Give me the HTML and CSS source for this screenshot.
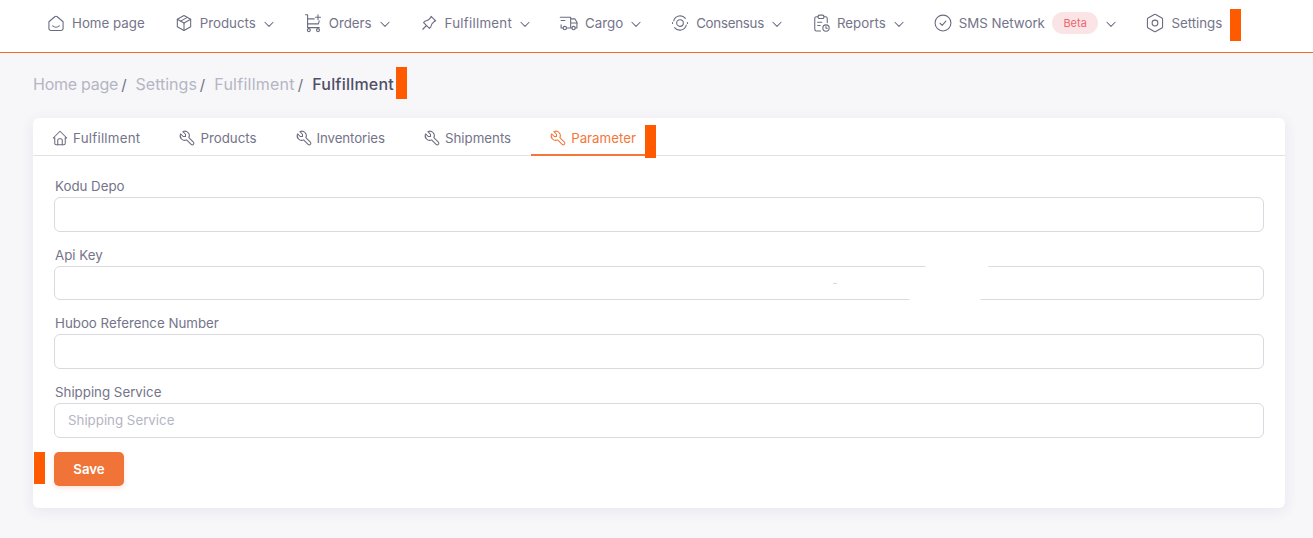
FILE: index.html
```html
<!DOCTYPE html>
<html lang="en">
<head>
<meta charset="UTF-8" />
<meta name="viewport" content="width=device-width, initial-scale=1" />
<title>Fulfillment</title>
<link rel="stylesheet" href="styles.css">
</head>
<body>

<svg class="defs" width="0" height="0">
  <symbol id="chevron" viewBox="0 0 24 24"><path d="M5 9l7 7l7 -7" /></symbol>
  <symbol id="wrench" viewBox="0 0 24 24"><path d="M7 10h3v-3l-3.500 -3.500a6 6 0 0 1 8 8l6 6a2 2 0 0 1 -3 3l-6 -6a6 6 0 0 1 -8 -8l3.500 3.500" /></symbol>
</svg>

<header class="topbar">
  <nav class="nav">
    <a class="nav-item">
      <svg class="icon" viewBox="0 0 24 24"><path d="M3.500 10.500l7 -6a2.400 2.400 0 0 1 3 0l7 6v8a2.500 2.500 0 0 1 -2.500 2.500h-12a2.500 2.500 0 0 1 -2.500 -2.500z" /><path d="M8 15.500c2.300 1.800 5.700 1.800 8 0" /></svg>
      Home page
    </a>
    <a class="nav-item">
      <svg class="icon" viewBox="0 0 24 24"><path d="M12 3l8 4.500v9l-8 4.500l-8 -4.500v-9z" /><path d="M12 12l8 -4.500" /><path d="M12 12v9" /><path d="M12 12l-8 -4.500" /><path d="M16 5.250l-8 4.500" /></svg>
      Products
      <svg class="chevron"><use href="#chevron" /></svg>
    </a>
    <a class="nav-item">
      <svg class="icon" viewBox="0 0 24 24"><path d="M3 2h2.500v15.500h14" /><path d="M5.500 7h8" /><path d="M5.500 13h13l1 -3.500" /><circle cx="7" cy="20.500" r="1.800" /><circle cx="18" cy="20.500" r="1.800" /><path d="M18 2v6M15 5h6" /></svg>
      Orders
      <svg class="chevron"><use href="#chevron" /></svg>
    </a>
    <a class="nav-item wide">
      <svg class="icon" viewBox="0 0 24 24"><path d="M15 4.500l-4 4l-4 1.500l-1.500 1.500l7 7l1.500 -1.500l1.500 -4l4 -4" /><path d="M9 15l-4.500 4.500" /><path d="M14.500 4l5.500 5.500" /></svg>
      Fulfillment
      <svg class="chevron"><use href="#chevron" /></svg>
    </a>
    <a class="nav-item">
      <svg class="icon" viewBox="0 0 24 24"><circle cx="7" cy="18" r="2" /><circle cx="17.500" cy="18" r="2" /><path d="M5 18h-2.500v-4m-1 -9h12.500v13m-4 0h5.500m4 0h2v-6h-7.500m0 -5h5l3 5" /><path d="M2.500 9h4.500" /></svg>
      Cargo
      <svg class="chevron"><use href="#chevron" /></svg>
    </a>
    <a class="nav-item narrow">
      <svg class="icon" viewBox="0 0 24 24"><circle cx="12" cy="12" r="4" /><path d="M4.500 9.500a8 8 0 0 1 14 -3" /><path d="M19.500 14.500a8 8 0 0 1 -14 3" /><path d="M3 11.500a9 9 0 0 0 0 1" /><path d="M21 11.500v1" /></svg>
      Consensus
      <svg class="chevron"><use href="#chevron" /></svg>
    </a>
    <a class="nav-item">
      <svg class="icon" viewBox="0 0 24 24"><path d="M8.500 4.500h-2a2 2 0 0 0 -2 2v13a2 2 0 0 0 2 2h5" /><path d="M15.500 4.500h2a2 2 0 0 1 2 2v5" /><rect x="8.500" y="2.500" width="7" height="4" rx="1.500" /><path d="M8 11h5M8 15h3" /><circle cx="18" cy="18" r="3.800" /><path d="M18 16.300v1.900h1.500" /></svg>
      Reports
      <svg class="chevron"><use href="#chevron" /></svg>
    </a>
    <a class="nav-item">
      <svg class="icon" viewBox="0 0 24 24"><circle cx="12" cy="12" r="9.500" /><path d="M8.500 12.300l2.500 2.500l4.500 -5" /></svg>
      SMS Network
      <span class="badge">Beta</span>
      <svg class="chevron"><use href="#chevron" /></svg>
    </a>
    <a class="nav-item">
      <svg class="icon" viewBox="0 0 24 24"><path d="M12.800 1.800l7.500 4.300c.5 .3 .8 .8 .8 1.400v9c0 .6 -.3 1.100 -.8 1.400l-7.500 4.300c-.5 .3 -1.100 .3 -1.600 0l-7.500 -4.300c-.5 -.3 -.8 -.8 -.8 -1.400v-9c0 -.6 .3 -1.100 .8 -1.400l7.500 -4.300c.5 -.3 1.100 -.3 1.600 0z" /><circle cx="12" cy="12" r="3.500" /></svg>
      Settings
      <span class="marker marker-nav"></span>
    </a>
  </nav>
</header>

<main class="content">
  <div class="breadcrumb">
    <a class="narrow">Home page</a><span class="sep">/</span>
    <a>Settings</a><span class="sep">/</span>
    <a class="wide">Fulfillment</a><span class="sep">/</span>
    <strong>Fulfillment<span class="marker marker-crumb"></span></strong>
  </div>

  <section class="card">
    <div class="tabs">
      <a class="tab wide">
        <svg class="tab-icon" viewBox="0 0 24 24"><path d="M5 12h-2l9 -9l9 9h-2" /><path d="M5 12v7a2 2 0 0 0 2 2h10a2 2 0 0 0 2 -2v-7" /><path d="M9 21v-6a2 2 0 0 1 2 -2h2a2 2 0 0 1 2 2v6" /></svg>
        Fulfillment
      </a>
      <a class="tab"><svg class="tab-icon"><use href="#wrench" /></svg> Products</a>
      <a class="tab tight"><svg class="tab-icon"><use href="#wrench" /></svg> Inventories</a>
      <a class="tab"><svg class="tab-icon"><use href="#wrench" /></svg> Shipments</a>
      <a class="tab active"><svg class="tab-icon"><use href="#wrench" /></svg> Parameter<span class="marker marker-tab"></span></a>
    </div>

    <form class="form">
      <div class="field">
        <label for="kodu">Kodu Depo</label>
        <input type="text" id="kodu" />
      </div>
      <div class="field">
        <label for="apikey">Api Key</label>
        <input type="text" id="apikey" />
        <span class="erase erase-top"></span>
        <span class="erase erase-bottom"></span>
        <span class="speck"></span>
      </div>
      <div class="field">
        <label for="huboo">Huboo Reference Number</label>
        <input type="text" id="huboo" />
      </div>
      <div class="field">
        <label for="shipping">Shipping Service</label>
        <input type="text" id="shipping" placeholder="Shipping Service" />
      </div>
      <div class="actions">
        <span class="marker marker-save"></span>
        <button type="button" class="save">Save</button>
      </div>
    </form>
  </section>
</main>

</body>
</html>
```

FILE: styles.css
```css
* {
  box-sizing: border-box;
}
html, body {
  height: 100%;
}
body {
  margin: 0;
  overflow: hidden;
  background: #f7f7fa;
  font-family: Inter, "Liberation Sans", sans-serif;
  font-size: 13.3px;
  color: #74748a;
}
.defs {
  position: absolute;
}
.wide {
  letter-spacing: 0.25px;
}
.narrow {
  letter-spacing: -0.25px;
}
.tight {
  letter-spacing: -0.1px;
}

/* top bar */
.topbar {
  height: 53px;
  background: #fff;
  border-bottom: 1px solid #f26a2b;
}
.nav {
  display: flex;
  align-items: center;
  gap: 29px;
  height: 46px;
  padding-left: 46px;
}
.nav-item {
  position: relative;
  display: flex;
  align-items: center;
  white-space: nowrap;
}
.icon {
  width: 20px;
  height: 20px;
  margin-right: 6px;
  fill: none;
  stroke: #6b6b80;
  stroke-width: 1.3;
  stroke-linecap: round;
  stroke-linejoin: round;
}
.chevron {
  width: 14px;
  height: 14px;
  margin: 1px -2px 0 6px;
  fill: none;
  stroke: #6b6b80;
  stroke-width: 1.8;
  stroke-linecap: round;
  stroke-linejoin: round;
}
.badge {
  margin-left: 7px;
  padding: 0 11.5px;
  height: 22px;
  line-height: 22px;
  border-radius: 11px;
  background: #fbe4e6;
  color: #f0646e;
  font-size: 11px;
  letter-spacing: 0;
}

/* orange markers lying over the page */
.marker {
  position: absolute;
  width: 11px;
  background: #ff5a00;
}
.marker-nav {
  left: calc(100% + 8px);
  top: -4px;
  height: 32px;
}
.marker-crumb {
  left: calc(100% + 2px);
  top: -7px;
  height: 32px;
}
.marker-tab {
  right: 0;
  top: 7px;
  height: 33px;
}
.marker-save {
  left: -20px;
  top: 0;
  height: 32px;
}

/* breadcrumb */
.content {
  padding: 0 28px 0 33px;
}
.breadcrumb {
  display: flex;
  align-items: center;
  height: 20px;
  margin: 21px 0 24px;
  font-size: 16px;
  color: #b5b5c3;
}
.sep {
  margin: 0 9px 0 3px;
  color: #6f6f84;
  font-size: 15px;
}
.breadcrumb strong {
  position: relative;
  font-weight: 500;
  letter-spacing: 0.2px;
  color: #4f4f66;
}

/* card */
.card {
  height: 390px;
  background: #fff;
  border-radius: 6px;
  box-shadow: 0 3px 14px rgba(70, 70, 110, 0.09);
}
.tabs {
  display: flex;
  height: 38px;
  border-bottom: 1px solid #e2e2e6;
}
.tab {
  position: relative;
  display: flex;
  align-items: center;
  gap: 4px;
  height: 38px;
  padding: 2px 20px 0 18px;
  white-space: nowrap;
}
.tab-icon {
  width: 18px;
  height: 18px;
  fill: none;
  stroke: #6b6b80;
  stroke-width: 1.4;
  stroke-linecap: round;
  stroke-linejoin: round;
}
.tab.active {
  color: #f4773a;
  border-bottom: 2px solid #f4773a;
  padding-top: 4px;
}
.tab.active .tab-icon {
  stroke: #f4773a;
}

/* form */
.form {
  padding: 20px 21px 0;
}
.field {
  position: relative;
  margin-bottom: 13px;
}
.field label {
  display: block;
  height: 20px;
  line-height: 20.6px;
  margin-bottom: 1px;
  padding-left: 1px;
}
.field input {
  display: block;
  width: 100%;
  height: 34.67px;
  padding: 0 13px;
  border: 1px solid #d9d9df;
  border-radius: 6px;
  background: #fff;
  font: inherit;
  color: #4b4b62;
}
.field input::placeholder {
  color: #b5b5c3;
}

/* blanked part of the api key field */
.erase {
  position: absolute;
  height: 6px;
  background: #fff;
  box-shadow: 0 0 3px #fff;
}
.erase-top {
  left: 872px;
  width: 62px;
  top: 18px;
}
.erase-bottom {
  left: 856px;
  width: 70px;
  top: 52px;
}
.speck {
  position: absolute;
  left: 779px;
  top: 38px;
  width: 4px;
  height: 1px;
  background: #d8d8dc;
}

.actions {
  position: relative;
  margin-top: 14px;
}
.save {
  display: block;
  width: 70px;
  height: 34px;
  border: none;
  border-radius: 5px;
  background: #f07338;
  box-shadow: 0 2px 5px rgba(241, 116, 58, 0.2);
  color: #fff;
  font: inherit;
  font-weight: 600;
}
```
